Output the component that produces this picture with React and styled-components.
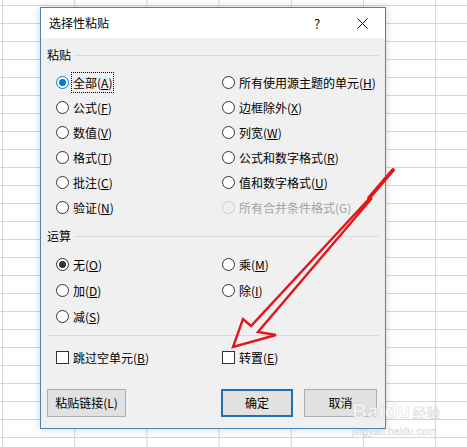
import React from "react";
import styled, { createGlobalStyle } from "styled-components";

const Global = createGlobalStyle`
  html, body { margin: 0; padding: 0; }
  body { font-family: "Noto Sans CJK SC", "Microsoft YaHei", sans-serif; }
`;

const Page = styled.div`
  position: relative;
  width: 467px;
  height: 447px;
  overflow: hidden;
  background-color: #fff;
  background-image: linear-gradient(to right, #d6d6d6 1px, transparent 1px),
    linear-gradient(to bottom, #d6d6d6 1px, transparent 1px);
  background-size: 72.2px 18px;
  background-position: 2px 5px;
`;

const Dialog = styled.div`
  position: absolute;
  left: 40px;
  top: 7px;
  width: 346px;
  height: 422px;
  box-sizing: border-box;
  border: 1px solid #4a84b3;
  background: #f0f0f0;
  box-shadow: 0 0 8px rgba(0, 0, 0, 0.18);
  display: flex;
  flex-direction: column;
  font-size: 12px;
  color: #000;
`;

const TitleBar = styled.div`
  height: 30px;
  background: #fff;
  display: flex;
  align-items: center;
  padding-left: 8px;
`;

const Title = styled.div`
  flex: 1;
  font-size: 12px;
  line-height: 16px;
`;

const TitleButton = styled.div`
  width: ${(p) => p.$w}px;
  height: 30px;
  display: flex;
  align-items: center;
  justify-content: center;
  font-size: 13px;
  color: #111;
`;

const Body = styled.div`
  flex: 1;
  display: flex;
  flex-direction: column;
  padding: 8px 6px 10px 6px;
`;

const SectionHeader = styled.div`
  height: 18px;
  display: flex;
  align-items: center;
  gap: 3px;
  line-height: 16px;
  margin-top: ${(p) => p.$mt || 0}px;
  &::after {
    content: "";
    flex: 1;
    height: 1px;
    background: #d9d9d9;
  }
`;

const OptionGrid = styled.div`
  display: grid;
  grid-template-columns: 166px 1fr;
  grid-auto-rows: ${(p) => p.$row}px;
  padding-left: 9px;
  margin-top: ${(p) => p.$mt || 0}px;
`;

const Option = styled.div`
  display: flex;
  align-items: center;
  gap: 4px;
  color: ${(p) => (p.$disabled ? "#a3a3a3" : "#000")};
  white-space: nowrap;
`;

const Radio = styled.span`
  width: 13px;
  height: 13px;
  box-sizing: border-box;
  border-radius: 50%;
  border: 1px solid
    ${(p) => (p.$disabled ? "#cccccc" : p.$focus ? "#0078d7" : "#333")};
  background: ${(p) => (p.$disabled ? "#f0f0f0" : "#fff")};
  display: flex;
  align-items: center;
  justify-content: center;
  flex: none;
  &::after {
    content: "";
    display: ${(p) => (p.$checked ? "block" : "none")};
    width: 7px;
    height: 7px;
    border-radius: 50%;
    background: ${(p) => (p.$focus ? "#0078d7" : "#333")};
  }
`;

const Label = styled.span`
  line-height: 17px;
  outline: ${(p) => (p.$focus ? "1px dotted #000" : "none")};
  outline-offset: 1px;
  u {
    text-decoration: underline;
    text-underline-offset: 1px;
  }
`;

const Separator = styled.div`
  height: 1px;
  background: #d9d9d9;
  margin-top: 6px;
`;

const CheckRow = styled.div`
  display: grid;
  grid-template-columns: 166px 1fr;
  height: 22px;
  padding-left: 9px;
  margin-top: 10px;
`;

const Checkbox = styled.span`
  width: 13px;
  height: 13px;
  box-sizing: border-box;
  border: 1px solid #333;
  background: #fff;
  flex: none;
`;

const ButtonRow = styled.div`
  display: flex;
  justify-content: space-between;
  padding-right: 2px;
  margin-top: 21px;
`;

const ButtonGroup = styled.div`
  display: flex;
  gap: 11px;
`;

const Button = styled.div`
  width: ${(p) => p.$w}px;
  height: 28px;
  box-sizing: border-box;
  background: #e1e1e1;
  border: ${(p) => (p.$primary ? "2px solid #1f6fb5" : "1px solid #adadad")};
  display: flex;
  align-items: center;
  justify-content: center;
  font-size: 12px;
  line-height: 16px;
  u {
    text-decoration: none;
  }
`;

const Overlay = styled.svg`
  position: absolute;
  left: 0;
  top: 0;
  pointer-events: none;
`;

const Watermark = styled.div`
  position: absolute;
  left: 352px;
  top: 400px;
  pointer-events: none;
  display: flex;
  flex-direction: column;
  color: rgba(255, 255, 255, 0.7);
  -webkit-text-stroke: 0.6px rgba(170, 170, 170, 0.4);
  font-family: "Liberation Sans", Arial, sans-serif;
`;

const WmMain = styled.div`
  display: flex;
  align-items: flex-end;
  font-size: 21px;
  font-weight: bold;
  line-height: 22px;
  span.cn {
    font-family: "Noto Sans CJK SC", sans-serif;
    font-size: 14px;
    font-weight: normal;
    line-height: 19px;
    margin-left: 2px;
  }
`;

const WmSub = styled.div`
  font-size: 10px;
  line-height: 12px;
  margin-top: 4px;
  letter-spacing: 0.2px;
`;

const opt = (text, key) => (
  <>
    {text}(<u>{key}</u>)
  </>
);

const pasteOptions = [
  ["全部", "A", "所有使用源主题的单元", "H"],
  ["公式", "F", "边框除外", "X"],
  ["数值", "V", "列宽", "W"],
  ["格式", "T", "公式和数字格式", "R"],
  ["批注", "C", "值和数字格式", "U"],
  ["验证", "N", "所有合并条件格式", "G"],
];

export default function App() {
  return (
    <Page>
      <Global />
      <Dialog>
        <TitleBar>
          <Title>选择性粘贴</Title>
          <TitleButton $w={46}>?</TitleButton>
          <TitleButton $w={45}>
            <svg width="11" height="11" viewBox="0 0 11 11">
              <path d="M0.5 0.5 L10.5 10.5 M10.5 0.5 L0.5 10.5" stroke="#111" strokeWidth="1" fill="none" />
            </svg>
          </TitleButton>
        </TitleBar>
        <Body>
          <SectionHeader>粘贴</SectionHeader>
          <OptionGrid $row={25} $mt={6}>
            {pasteOptions.map(([a, ak, b, bk], i) => (
              <React.Fragment key={a}>
                <Option>
                  <Radio $checked={i === 0} $focus={i === 0} />
                  <Label $focus={i === 0}>{opt(a, ak)}</Label>
                </Option>
                <Option $disabled={i === 5}>
                  <Radio $disabled={i === 5} />
                  <Label>
                    {i === 5 ? (
                      <>
                        {b}({bk})
                      </>
                    ) : (
                      opt(b, bk)
                    )}
                  </Label>
                </Option>
              </React.Fragment>
            ))}
          </OptionGrid>
          <SectionHeader $mt={7}>运算</SectionHeader>
          <OptionGrid $row={26} $mt={6}>
            <Option>
              <Radio $checked />
              <Label>{opt("无", "O")}</Label>
            </Option>
            <Option>
              <Radio />
              <Label>{opt("乘", "M")}</Label>
            </Option>
            <Option>
              <Radio />
              <Label>{opt("加", "D")}</Label>
            </Option>
            <Option>
              <Radio />
              <Label>{opt("除", "I")}</Label>
            </Option>
            <Option>
              <Radio />
              <Label>{opt("减", "S")}</Label>
            </Option>
          </OptionGrid>
          <Separator />
          <CheckRow>
            <Option>
              <Checkbox />
              <Label>{opt("跳过空单元", "B")}</Label>
            </Option>
            <Option>
              <Checkbox />
              <Label>{opt("转置", "E")}</Label>
            </Option>
          </CheckRow>
          <ButtonRow>
            <Button $w={79}>{opt("粘贴链接", "L")}</Button>
            <ButtonGroup>
              <Button $w={72} $primary>确定</Button>
              <Button $w={73}>取消</Button>
            </ButtonGroup>
          </ButtonRow>
        </Body>
      </Dialog>
      <Overlay width="467" height="447" viewBox="0 0 467 447">
        <path d="M393 170 L369 198" stroke="#e3161b" strokeWidth="3.8" strokeLinecap="round" fill="none" />
        <polygon
          points="233,347 243,319 251,326 368,200 372,198 258,332 276,335"
          stroke="#e3161b"
          strokeWidth="2.4"
          strokeLinejoin="miter"
          fill="none"
        />
      </Overlay>
      <Watermark>
        <WmMain>
          Baidu<span className="cn">经验</span>
        </WmMain>
        <WmSub>jingyan.baidu.com</WmSub>
      </Watermark>
    </Page>
  );
}
